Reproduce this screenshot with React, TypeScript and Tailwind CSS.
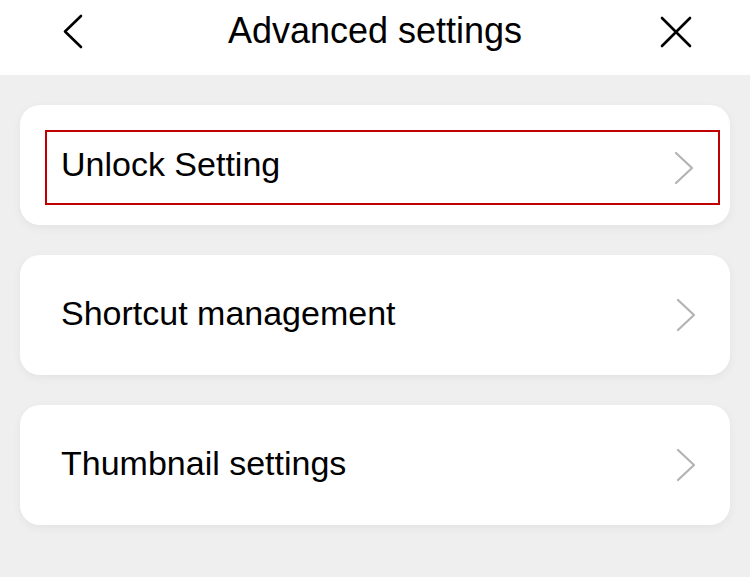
import React from "react";

const font = { fontFamily: '"Liberation Sans", Arial, Helvetica, sans-serif' };

function Chevron({ first }: { first?: boolean }) {
  return (
    <svg width="22" height="34" viewBox="0 0 22 34" fill="none" className={first ? "shrink-0 mt-[6px]" : "shrink-0 mt-[4px]"}>
      <path d="M3 2 L19 17 L3 32" stroke="#b3b3b3" strokeWidth="2.2" strokeLinecap="round" strokeLinejoin="round" />
    </svg>
  );
}

export default function App() {
  return (
    <div className="w-[750px] h-[577px] bg-[#efefef] flex flex-col" style={font}>
      <div className="h-[75px] bg-white flex items-start pt-[9px]">
        <div className="w-[100px] flex pl-[62px] pt-[5px]">
          <svg width="24" height="36" viewBox="0 0 24 36" fill="none">
            <path d="M19 2 L3 17.5 L19 33" stroke="#000" strokeWidth="2.6" strokeLinecap="round" strokeLinejoin="round" />
          </svg>
        </div>
        <div className="flex-1 text-center text-[36px] leading-[44px] text-black">Advanced settings</div>
        <div className="w-[100px] flex pl-[10px] pt-[7px]">
          <svg width="32" height="32" viewBox="0 0 32 32" fill="none">
            <path d="M2 2 L30 30 M30 2 L2 30" stroke="#000" strokeWidth="2.6" strokeLinecap="round" />
          </svg>
        </div>
      </div>
      <div className="flex flex-col gap-[30px] px-[20px] pt-[30px]">
        <div className="h-[120px] bg-white rounded-[20px] shadow-[0_3px_10px_rgba(0,0,0,0.05)] pt-[25px] pb-[20px] pl-[25px] pr-[10px]">
          <div className="h-[75px] border-2 border-[#c00000] flex items-center justify-between pl-[14px] pr-[23px] pb-[6px]">
            <span className="text-[34px] text-black">Unlock Setting</span>
            <Chevron first />
          </div>
        </div>
        <div className="h-[120px] bg-white rounded-[20px] shadow-[0_3px_10px_rgba(0,0,0,0.05)] flex items-center justify-between pl-[41px] pr-[33px] pb-[4px]">
          <span className="text-[34px] text-black">Shortcut management</span>
          <Chevron />
        </div>
        <div className="h-[120px] bg-white rounded-[20px] shadow-[0_3px_10px_rgba(0,0,0,0.05)] flex items-center justify-between pl-[41px] pr-[33px] pb-[4px]">
          <span className="text-[34px] text-black">Thumbnail settings</span>
          <Chevron />
        </div>
      </div>
    </div>
  );
}
